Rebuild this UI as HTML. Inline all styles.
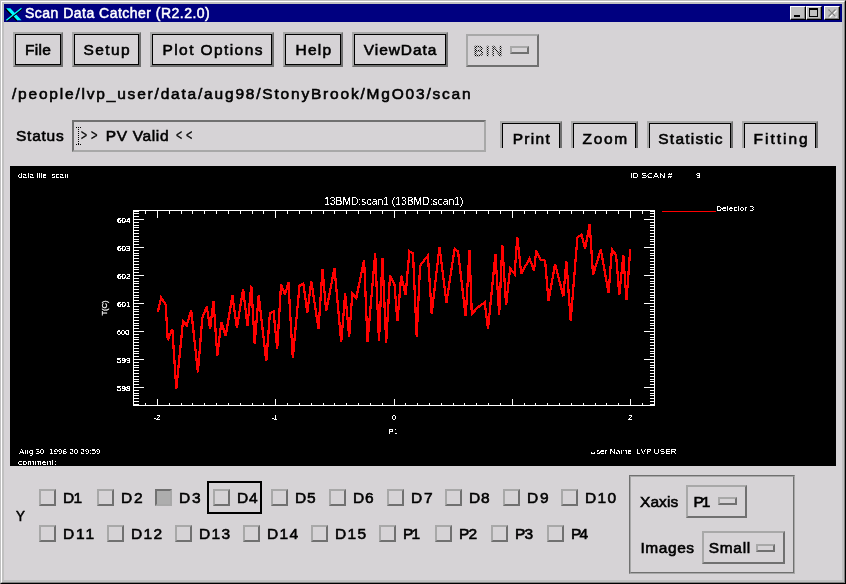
<!DOCTYPE html>
<html><head><meta charset="utf-8"><style>
html,body{margin:0;padding:0}
body{width:846px;height:584px;overflow:hidden;position:relative;background:#d6d3d6;font-family:"Liberation Sans",sans-serif;}
.a{position:absolute}
.btn{position:absolute;border:2px solid;border-color:#a8a8a8 #707070 #707070 #a8a8a8;box-sizing:content-box}
.bi{position:absolute;left:0;top:0;right:0;bottom:0;border:1px solid #000;}
.t{position:absolute;white-space:pre;filter:grayscale(1);font-size:15px;line-height:15px;color:#000;transform-origin:0 0}
.cb{position:absolute;width:13px;height:13px;border:2px solid;border-color:#a8a8a8 #707070 #707070 #a8a8a8}
.pt{position:absolute;white-space:pre;color:#fff;line-height:1;font-family:"Liberation Sans",sans-serif;transform-origin:0 0}
.ind{position:absolute;width:15px;height:4px;border:2px solid;border-color:#a8a8a8 #707070 #707070 #a8a8a8}
</style></head><body>

<svg width="0" height="0" style="position:absolute"><filter id="thr" x="-10%" y="-30%" width="120%" height="160%"><feComponentTransfer><feFuncA type="discrete" tableValues="0 0 1 1"/></feComponentTransfer></filter></svg>
<div class="a" style="left:0;top:0;width:846px;height:584px;box-sizing:border-box;border-left:1px solid #c0c0c0;border-top:1px solid #c0c0c0;border-right:1px solid #000;border-bottom:1px solid #000"></div>
<div class="a" style="left:1px;top:1px;width:844px;height:582px;box-sizing:border-box;border-left:1px solid #fff;border-top:1px solid #fff;border-right:1px solid #808080;border-bottom:1px solid #808080"></div>
<div class="a" style="left:2px;top:2px;width:842px;height:580px;box-sizing:border-box;border:2px solid #c0c0c0"></div>

<div class="a" style="left:4px;top:4px;width:838px;height:18px;background:#000080"></div>
<svg class="a" style="left:3px;top:4px" width="22" height="18" viewBox="0 0 22 18">
<path d="M2.6 4.6 L14.0 16.6" stroke="#000" stroke-width="1.6"/>
<path d="M3.1 4.2 L7.4 4.2 L18.5 16.2 L14.2 16.2 Z" fill="#00ffff"/>
<path d="M18.9 4.9 L4.0 16.9" stroke="#000" stroke-width="1.5"/>
<path d="M18.5 4.2 L3.4 16.2" stroke="#00ffff" stroke-width="1.3"/>
</svg>
<div class="a" style="left:790px;top:6px;width:16px;height:14px;box-sizing:border-box;background:#c0c0c0;border-left:1px solid #fff;border-top:1px solid #fff;border-right:1px solid #000;border-bottom:1px solid #000"><div class="a" style="left:0;top:0;right:0;bottom:0;border-right:1px solid #808080;border-bottom:1px solid #808080"></div></div>
<div class="a" style="left:806px;top:6px;width:16px;height:14px;box-sizing:border-box;background:#c0c0c0;border-left:1px solid #fff;border-top:1px solid #fff;border-right:1px solid #000;border-bottom:1px solid #000"><div class="a" style="left:0;top:0;right:0;bottom:0;border-right:1px solid #808080;border-bottom:1px solid #808080"></div></div>
<div class="a" style="left:824px;top:6px;width:16px;height:14px;box-sizing:border-box;background:#c0c0c0;border-left:1px solid #fff;border-top:1px solid #fff;border-right:1px solid #000;border-bottom:1px solid #000"><div class="a" style="left:0;top:0;right:0;bottom:0;border-right:1px solid #808080;border-bottom:1px solid #808080"></div></div>
<div class="a" style="left:794px;top:15px;width:6px;height:2px;background:#000"></div>
<div class="a" style="left:809px;top:8px;width:9px;height:9px;box-sizing:border-box;border:1px solid #000;border-top-width:2px"></div>
<svg class="a" style="left:824px;top:6px" width="16" height="14" viewBox="0 0 16 14"><path d="M4.5 3.5 L11.5 10.5 M11.5 3.5 L4.5 10.5" stroke="#ffffff" stroke-width="1.3" transform="translate(1,1)"/><path d="M4.5 3.5 L11.5 10.5 M11.5 3.5 L4.5 10.5" stroke="#808080" stroke-width="1.3"/></svg>
<div class="btn" style="left:13px;top:32px;width:46px;height:31px"><div class="bi"></div></div>
<div class="btn" style="left:72px;top:32px;width:65px;height:31px"><div class="bi"></div></div>
<div class="btn" style="left:150px;top:32px;width:120px;height:31px"><div class="bi"></div></div>
<div class="btn" style="left:283px;top:32px;width:56px;height:31px"><div class="bi"></div></div>
<div class="btn" style="left:352px;top:32px;width:92px;height:31px"><div class="bi"></div></div>
<div class="btn" style="left:466px;top:34px;width:69px;height:29px"></div>
<div class="ind" style="left:510px;top:46px"></div>
<div class="a" style="left:72px;top:120px;width:410px;height:28px;border:2px solid;border-color:#707070 #a8a8a8 #a8a8a8 #707070"></div>
<div class="a" style="left:78px;top:127px;width:1px;height:18px;background:repeating-linear-gradient(#000 0 1px,transparent 1px 2px)"></div>
<div class="a" style="left:76px;top:127px;width:5px;height:1px;background:repeating-linear-gradient(90deg,#000 0 1px,transparent 1px 2px)"></div><div class="a" style="left:76px;top:144px;width:5px;height:1px;background:repeating-linear-gradient(90deg,#000 0 1px,transparent 1px 2px)"></div>
<div class="a" style="left:490px;top:115px;width:340px;height:33px;overflow:hidden">
<div class="btn" style="left:10px;top:6px;width:58px;height:31px"><div class="bi"></div></div>
<div class="btn" style="left:81px;top:6px;width:63px;height:31px"><div class="bi"></div></div>
<div class="btn" style="left:157px;top:6px;width:82px;height:31px"><div class="bi"></div></div>
<div class="btn" style="left:252px;top:6px;width:72px;height:31px"><div class="bi"></div></div>
</div>
<svg width="826" height="300" viewBox="10 166 826 300" style="position:absolute;left:10px;top:166px;display:block">
<rect x="10" y="166" width="826" height="300" fill="#000"/>
<g fill="#fff" shape-rendering="crispEdges">
<rect x="133" y="210" width="522" height="1"/>
<rect x="133" y="405" width="522" height="1"/>
<rect x="133" y="210" width="1" height="196"/>
<rect x="654" y="210" width="1" height="196"/>
<rect x="133" y="211" width="6" height="1"/>
<rect x="650" y="211" width="5" height="1"/>
<rect x="133" y="213" width="6" height="1"/>
<rect x="650" y="213" width="5" height="1"/>
<rect x="133" y="216" width="6" height="1"/>
<rect x="650" y="216" width="5" height="1"/>
<rect x="133" y="219" width="11" height="1"/>
<rect x="644" y="219" width="11" height="1"/>
<rect x="133" y="222" width="6" height="1"/>
<rect x="650" y="222" width="5" height="1"/>
<rect x="133" y="225" width="6" height="1"/>
<rect x="650" y="225" width="5" height="1"/>
<rect x="133" y="227" width="6" height="1"/>
<rect x="650" y="227" width="5" height="1"/>
<rect x="133" y="230" width="6" height="1"/>
<rect x="650" y="230" width="5" height="1"/>
<rect x="133" y="233" width="6" height="1"/>
<rect x="650" y="233" width="5" height="1"/>
<rect x="133" y="236" width="6" height="1"/>
<rect x="650" y="236" width="5" height="1"/>
<rect x="133" y="239" width="6" height="1"/>
<rect x="650" y="239" width="5" height="1"/>
<rect x="133" y="241" width="6" height="1"/>
<rect x="650" y="241" width="5" height="1"/>
<rect x="133" y="244" width="6" height="1"/>
<rect x="650" y="244" width="5" height="1"/>
<rect x="133" y="247" width="11" height="1"/>
<rect x="644" y="247" width="11" height="1"/>
<rect x="133" y="250" width="6" height="1"/>
<rect x="650" y="250" width="5" height="1"/>
<rect x="133" y="253" width="6" height="1"/>
<rect x="650" y="253" width="5" height="1"/>
<rect x="133" y="255" width="6" height="1"/>
<rect x="650" y="255" width="5" height="1"/>
<rect x="133" y="258" width="6" height="1"/>
<rect x="650" y="258" width="5" height="1"/>
<rect x="133" y="261" width="6" height="1"/>
<rect x="650" y="261" width="5" height="1"/>
<rect x="133" y="264" width="6" height="1"/>
<rect x="650" y="264" width="5" height="1"/>
<rect x="133" y="267" width="6" height="1"/>
<rect x="650" y="267" width="5" height="1"/>
<rect x="133" y="269" width="6" height="1"/>
<rect x="650" y="269" width="5" height="1"/>
<rect x="133" y="272" width="6" height="1"/>
<rect x="650" y="272" width="5" height="1"/>
<rect x="133" y="275" width="11" height="1"/>
<rect x="644" y="275" width="11" height="1"/>
<rect x="133" y="278" width="6" height="1"/>
<rect x="650" y="278" width="5" height="1"/>
<rect x="133" y="281" width="6" height="1"/>
<rect x="650" y="281" width="5" height="1"/>
<rect x="133" y="283" width="6" height="1"/>
<rect x="650" y="283" width="5" height="1"/>
<rect x="133" y="286" width="6" height="1"/>
<rect x="650" y="286" width="5" height="1"/>
<rect x="133" y="289" width="6" height="1"/>
<rect x="650" y="289" width="5" height="1"/>
<rect x="133" y="292" width="6" height="1"/>
<rect x="650" y="292" width="5" height="1"/>
<rect x="133" y="295" width="6" height="1"/>
<rect x="650" y="295" width="5" height="1"/>
<rect x="133" y="297" width="6" height="1"/>
<rect x="650" y="297" width="5" height="1"/>
<rect x="133" y="300" width="6" height="1"/>
<rect x="650" y="300" width="5" height="1"/>
<rect x="133" y="303" width="11" height="1"/>
<rect x="644" y="303" width="11" height="1"/>
<rect x="133" y="306" width="6" height="1"/>
<rect x="650" y="306" width="5" height="1"/>
<rect x="133" y="309" width="6" height="1"/>
<rect x="650" y="309" width="5" height="1"/>
<rect x="133" y="311" width="6" height="1"/>
<rect x="650" y="311" width="5" height="1"/>
<rect x="133" y="314" width="6" height="1"/>
<rect x="650" y="314" width="5" height="1"/>
<rect x="133" y="317" width="6" height="1"/>
<rect x="650" y="317" width="5" height="1"/>
<rect x="133" y="320" width="6" height="1"/>
<rect x="650" y="320" width="5" height="1"/>
<rect x="133" y="323" width="6" height="1"/>
<rect x="650" y="323" width="5" height="1"/>
<rect x="133" y="325" width="6" height="1"/>
<rect x="650" y="325" width="5" height="1"/>
<rect x="133" y="328" width="6" height="1"/>
<rect x="650" y="328" width="5" height="1"/>
<rect x="133" y="331" width="11" height="1"/>
<rect x="644" y="331" width="11" height="1"/>
<rect x="133" y="334" width="6" height="1"/>
<rect x="650" y="334" width="5" height="1"/>
<rect x="133" y="337" width="6" height="1"/>
<rect x="650" y="337" width="5" height="1"/>
<rect x="133" y="339" width="6" height="1"/>
<rect x="650" y="339" width="5" height="1"/>
<rect x="133" y="342" width="6" height="1"/>
<rect x="650" y="342" width="5" height="1"/>
<rect x="133" y="345" width="6" height="1"/>
<rect x="650" y="345" width="5" height="1"/>
<rect x="133" y="348" width="6" height="1"/>
<rect x="650" y="348" width="5" height="1"/>
<rect x="133" y="351" width="6" height="1"/>
<rect x="650" y="351" width="5" height="1"/>
<rect x="133" y="353" width="6" height="1"/>
<rect x="650" y="353" width="5" height="1"/>
<rect x="133" y="356" width="6" height="1"/>
<rect x="650" y="356" width="5" height="1"/>
<rect x="133" y="359" width="11" height="1"/>
<rect x="644" y="359" width="11" height="1"/>
<rect x="133" y="362" width="6" height="1"/>
<rect x="650" y="362" width="5" height="1"/>
<rect x="133" y="365" width="6" height="1"/>
<rect x="650" y="365" width="5" height="1"/>
<rect x="133" y="367" width="6" height="1"/>
<rect x="650" y="367" width="5" height="1"/>
<rect x="133" y="370" width="6" height="1"/>
<rect x="650" y="370" width="5" height="1"/>
<rect x="133" y="373" width="6" height="1"/>
<rect x="650" y="373" width="5" height="1"/>
<rect x="133" y="376" width="6" height="1"/>
<rect x="650" y="376" width="5" height="1"/>
<rect x="133" y="379" width="6" height="1"/>
<rect x="650" y="379" width="5" height="1"/>
<rect x="133" y="381" width="6" height="1"/>
<rect x="650" y="381" width="5" height="1"/>
<rect x="133" y="384" width="6" height="1"/>
<rect x="650" y="384" width="5" height="1"/>
<rect x="133" y="387" width="11" height="1"/>
<rect x="644" y="387" width="11" height="1"/>
<rect x="133" y="390" width="6" height="1"/>
<rect x="650" y="390" width="5" height="1"/>
<rect x="133" y="393" width="6" height="1"/>
<rect x="650" y="393" width="5" height="1"/>
<rect x="133" y="395" width="6" height="1"/>
<rect x="650" y="395" width="5" height="1"/>
<rect x="133" y="398" width="6" height="1"/>
<rect x="650" y="398" width="5" height="1"/>
<rect x="133" y="401" width="6" height="1"/>
<rect x="650" y="401" width="5" height="1"/>
<rect x="133" y="404" width="6" height="1"/>
<rect x="650" y="404" width="5" height="1"/>
<rect x="133" y="210" width="1" height="4"/>
<rect x="133" y="403" width="1" height="3"/>
<rect x="145" y="210" width="1" height="4"/>
<rect x="145" y="403" width="1" height="3"/>
<rect x="157" y="210" width="1" height="8"/>
<rect x="157" y="399" width="1" height="7"/>
<rect x="169" y="210" width="1" height="4"/>
<rect x="169" y="403" width="1" height="3"/>
<rect x="181" y="210" width="1" height="4"/>
<rect x="181" y="403" width="1" height="3"/>
<rect x="192" y="210" width="1" height="4"/>
<rect x="192" y="403" width="1" height="3"/>
<rect x="204" y="210" width="1" height="4"/>
<rect x="204" y="403" width="1" height="3"/>
<rect x="216" y="210" width="1" height="4"/>
<rect x="216" y="403" width="1" height="3"/>
<rect x="228" y="210" width="1" height="4"/>
<rect x="228" y="403" width="1" height="3"/>
<rect x="240" y="210" width="1" height="4"/>
<rect x="240" y="403" width="1" height="3"/>
<rect x="252" y="210" width="1" height="4"/>
<rect x="252" y="403" width="1" height="3"/>
<rect x="263" y="210" width="1" height="4"/>
<rect x="263" y="403" width="1" height="3"/>
<rect x="275" y="210" width="1" height="8"/>
<rect x="275" y="399" width="1" height="7"/>
<rect x="287" y="210" width="1" height="4"/>
<rect x="287" y="403" width="1" height="3"/>
<rect x="299" y="210" width="1" height="4"/>
<rect x="299" y="403" width="1" height="3"/>
<rect x="311" y="210" width="1" height="4"/>
<rect x="311" y="403" width="1" height="3"/>
<rect x="323" y="210" width="1" height="4"/>
<rect x="323" y="403" width="1" height="3"/>
<rect x="334" y="210" width="1" height="4"/>
<rect x="334" y="403" width="1" height="3"/>
<rect x="346" y="210" width="1" height="4"/>
<rect x="346" y="403" width="1" height="3"/>
<rect x="358" y="210" width="1" height="4"/>
<rect x="358" y="403" width="1" height="3"/>
<rect x="370" y="210" width="1" height="4"/>
<rect x="370" y="403" width="1" height="3"/>
<rect x="382" y="210" width="1" height="4"/>
<rect x="382" y="403" width="1" height="3"/>
<rect x="394" y="210" width="1" height="8"/>
<rect x="394" y="399" width="1" height="7"/>
<rect x="405" y="210" width="1" height="4"/>
<rect x="405" y="403" width="1" height="3"/>
<rect x="417" y="210" width="1" height="4"/>
<rect x="417" y="403" width="1" height="3"/>
<rect x="429" y="210" width="1" height="4"/>
<rect x="429" y="403" width="1" height="3"/>
<rect x="441" y="210" width="1" height="4"/>
<rect x="441" y="403" width="1" height="3"/>
<rect x="453" y="210" width="1" height="4"/>
<rect x="453" y="403" width="1" height="3"/>
<rect x="464" y="210" width="1" height="4"/>
<rect x="464" y="403" width="1" height="3"/>
<rect x="476" y="210" width="1" height="4"/>
<rect x="476" y="403" width="1" height="3"/>
<rect x="488" y="210" width="1" height="4"/>
<rect x="488" y="403" width="1" height="3"/>
<rect x="500" y="210" width="1" height="4"/>
<rect x="500" y="403" width="1" height="3"/>
<rect x="512" y="210" width="1" height="8"/>
<rect x="512" y="399" width="1" height="7"/>
<rect x="524" y="210" width="1" height="4"/>
<rect x="524" y="403" width="1" height="3"/>
<rect x="535" y="210" width="1" height="4"/>
<rect x="535" y="403" width="1" height="3"/>
<rect x="547" y="210" width="1" height="4"/>
<rect x="547" y="403" width="1" height="3"/>
<rect x="559" y="210" width="1" height="4"/>
<rect x="559" y="403" width="1" height="3"/>
<rect x="571" y="210" width="1" height="4"/>
<rect x="571" y="403" width="1" height="3"/>
<rect x="583" y="210" width="1" height="4"/>
<rect x="583" y="403" width="1" height="3"/>
<rect x="595" y="210" width="1" height="4"/>
<rect x="595" y="403" width="1" height="3"/>
<rect x="606" y="210" width="1" height="4"/>
<rect x="606" y="403" width="1" height="3"/>
<rect x="618" y="210" width="1" height="4"/>
<rect x="618" y="403" width="1" height="3"/>
<rect x="630" y="210" width="1" height="8"/>
<rect x="630" y="399" width="1" height="7"/>
<rect x="642" y="210" width="1" height="4"/>
<rect x="642" y="403" width="1" height="3"/>
</g>
<polyline points="157.8,312.3 161.1,297.8 165.6,304.5 167.8,340.2 172.3,329.0 176.3,389.2 183.0,321.2 186.7,325.7 191.2,310.1 197.9,372.4 202.3,317.9 206.8,306.7 210.1,329.0 213.5,301.2 217.3,355.7 221.3,322.3 225.7,335.7 232.4,295.6 236.9,327.9 243.1,288.9 247.5,325.7 251.3,285.6 254.7,343.5 258.7,295.6 266.3,361.3 269.9,313.5 273.5,311.3 277.2,349.1 281.0,284.5 285.0,294.6 288.4,282.3 292.8,358.0 299.5,285.7 303.3,283.4 307.3,312.4 311.3,281.2 318.5,329.1 322.5,269.0 326.2,311.3 334.5,267.8 341.2,342.4 345.2,293.5 349.2,336.9 352.3,293.5 356.3,297.9 364.1,260.0 367.5,342.4 375.2,253.4 379.0,341.3 382.4,257.8 386.2,342.5 390.0,275.7 394.5,284.6 397.4,321.3 401.2,275.7 405.6,294.6 409.4,251.2 413.0,253.4 416.7,336.5 420.1,265.6 427.9,255.6 431.7,313.5 439.5,246.7 446.4,302.4 454.6,248.9 458.0,251.2 465.7,316.4 469.5,250.5 471.8,314.2 477.6,307.5 484.7,302.4 488.0,329.1 495.4,254.5 499.2,314.6 502.3,245.0 506.1,305.2 510.1,268.5 514.6,274.0 517.3,237.3 521.3,274.0 529.5,258.4 534.0,270.7 536.2,250.6 540.7,259.5 545.1,260.7 548.5,300.7 555.1,264.0 563.4,296.3 566.3,260.7 570.7,320.8 577.4,237.3 581.4,234.6 585.2,248.4 589.7,223.9 593.0,275.1 600.8,249.5 608.6,293.0 611.9,249.5 616.1,255.2 619.3,294.7 623.3,255.2 626.5,300.4 630.3,248.6" fill="none" stroke="#ff0000" stroke-width="2.25" stroke-linejoin="miter" stroke-miterlimit="3" shape-rendering="crispEdges"/>
<rect x="662" y="211" width="54" height="1" fill="#ff0000" shape-rendering="crispEdges"/>
</svg>
<div class="pt" style="left:97px;top:304px;font-size:8px;width:16px;text-align:center;-webkit-text-stroke:0.2px #fff;filter:grayscale(1);transform:rotate(-90deg) scaleX(0.95);transform-origin:50% 50%">T(C)</div>
<div class="cb" style="left:39px;top:489px;"></div>
<div class="cb" style="left:97px;top:489px;"></div>
<div class="cb" style="left:155px;top:489px;background:#adadad;border-color:#707070 #a8a8a8 #a8a8a8 #707070;"></div>
<div class="cb" style="left:213px;top:489px;"></div>
<div class="cb" style="left:271px;top:489px;"></div>
<div class="cb" style="left:329px;top:489px;"></div>
<div class="cb" style="left:387px;top:489px;"></div>
<div class="cb" style="left:445px;top:489px;"></div>
<div class="cb" style="left:503px;top:489px;"></div>
<div class="cb" style="left:561px;top:489px;"></div>
<div class="cb" style="left:39px;top:525px"></div>
<div class="cb" style="left:107px;top:525px"></div>
<div class="cb" style="left:175px;top:525px"></div>
<div class="cb" style="left:243px;top:525px"></div>
<div class="cb" style="left:311px;top:525px"></div>
<div class="cb" style="left:379px;top:525px"></div>
<div class="cb" style="left:435px;top:525px"></div>
<div class="cb" style="left:491px;top:525px"></div>
<div class="cb" style="left:547px;top:525px"></div>
<div class="a" style="left:207px;top:481px;width:51px;height:29px;border:2px solid #000"></div>
<div class="a" style="left:629px;top:475px;width:164px;height:97px;border:1px solid;border-color:#707070 #a8a8a8 #a8a8a8 #707070"></div>
<div class="a" style="left:630px;top:476px;width:162px;height:95px;border:1px solid;border-color:#a8a8a8 #707070 #707070 #a8a8a8"></div>
<div class="btn" style="left:686px;top:485px;width:57px;height:29px"></div>
<div class="ind" style="left:718px;top:497px"></div>
<div class="btn" style="left:702px;top:531px;width:79px;height:29px"></div>
<div class="ind" style="left:756px;top:544px"></div>
<div class="t" style="left:25.00px;top:6px;font-size:14px;line-height:14px;font-weight:normal;color:#fff;-webkit-text-stroke:0.5px #fff;letter-spacing:0.480px;">Scan Data Catcher (R2.2.0)</div>
<div class="t" style="left:25.00px;top:42px;font-size:15.5px;line-height:15.5px;font-weight:normal;color:#000;-webkit-text-stroke:0.6px #000;letter-spacing:0.333px;">File</div>
<div class="t" style="left:83.60px;top:42px;font-size:15.5px;line-height:15.5px;font-weight:normal;color:#000;-webkit-text-stroke:0.6px #000;letter-spacing:1.375px;">Setup</div>
<div class="t" style="left:162.50px;top:42px;font-size:15.5px;line-height:15.5px;font-weight:normal;color:#000;-webkit-text-stroke:0.6px #000;letter-spacing:1.409px;">Plot Options</div>
<div class="t" style="left:295.60px;top:42px;font-size:15.5px;line-height:15.5px;font-weight:normal;color:#000;-webkit-text-stroke:0.6px #000;letter-spacing:1.233px;">Help</div>
<div class="t" style="left:363.80px;top:42px;font-size:15.5px;line-height:15.5px;font-weight:normal;color:#000;-webkit-text-stroke:0.6px #000;letter-spacing:0.914px;">ViewData</div>
<div class="t" style="left:473.60px;top:43px;font-size:15.5px;line-height:15.5px;font-weight:normal;color:#000;-webkit-text-stroke:0.3px #000;letter-spacing:1.550px;-webkit-mask-image:repeating-conic-gradient(#000 0 25%,transparent 0 50%);-webkit-mask-size:2px 2px;mask-image:repeating-conic-gradient(#000 0 25%,transparent 0 50%);mask-size:2px 2px;">BIN</div>
<div class="t" style="left:12.00px;top:86px;font-size:15.5px;line-height:15.5px;font-weight:normal;color:#000;-webkit-text-stroke:0.6px #000;letter-spacing:1.800px;">/people/lvp_user/data/aug98/StonyBrook/MgO03/scan</div>
<div class="t" style="left:16.00px;top:128px;font-size:15.5px;line-height:15.5px;font-weight:normal;color:#000;-webkit-text-stroke:0.6px #000;letter-spacing:0.760px;">Status</div>
<div class="t" style="left:80.80px;top:127px;font-size:15.5px;line-height:15.5px;font-weight:normal;color:#000;-webkit-text-stroke:0.35px #000;transform:scaleX(0.6778);">&gt;</div>
<div class="t" style="left:90.80px;top:127px;font-size:15.5px;line-height:15.5px;font-weight:normal;color:#000;-webkit-text-stroke:0.35px #000;transform:scaleX(0.7222);">&gt;</div>
<div class="t" style="left:105.70px;top:128px;font-size:15.5px;line-height:15.5px;font-weight:normal;color:#000;-webkit-text-stroke:0.6px #000;letter-spacing:0.657px;">PV Valid</div>
<div class="t" style="left:175.60px;top:127px;font-size:15.5px;line-height:15.5px;font-weight:normal;color:#000;-webkit-text-stroke:0.35px #000;transform:scaleX(0.6667);">&lt;</div>
<div class="t" style="left:186.00px;top:127px;font-size:15.5px;line-height:15.5px;font-weight:normal;color:#000;-webkit-text-stroke:0.35px #000;transform:scaleX(0.6889);">&lt;</div>
<div class="t" style="left:512.70px;top:131px;font-size:15.5px;line-height:15.5px;font-weight:normal;color:#000;-webkit-text-stroke:0.6px #000;letter-spacing:1.325px;">Print</div>
<div class="t" style="left:582.50px;top:131px;font-size:15.5px;line-height:15.5px;font-weight:normal;color:#000;-webkit-text-stroke:0.6px #000;letter-spacing:1.667px;">Zoom</div>
<div class="t" style="left:658.30px;top:131px;font-size:15.5px;line-height:15.5px;font-weight:normal;color:#000;-webkit-text-stroke:0.6px #000;letter-spacing:1.238px;">Statistic</div>
<div class="t" style="left:753.50px;top:131px;font-size:15.5px;line-height:15.5px;font-weight:normal;color:#000;-webkit-text-stroke:0.6px #000;letter-spacing:2.000px;">Fitting</div>
<div class="t" style="left:17.90px;top:172px;font-size:8px;line-height:8px;font-weight:normal;color:#fff;transform:scaleX(1.0286);filter:url(#thr);">data file: scan</div>
<div class="t" style="left:629.51px;top:172px;font-size:8px;line-height:8px;font-weight:normal;color:#fff;transform:scaleX(1.0921);filter:url(#thr);">ID SCAN #</div>
<div class="t" style="left:695.70px;top:172px;font-size:8px;line-height:8px;font-weight:normal;color:#fff;transform:scaleX(1.0750);filter:url(#thr);">9</div>
<div class="t" style="left:324.27px;top:197px;font-size:10px;line-height:10px;font-weight:normal;color:#fff;transform:scaleX(1.0331);filter:url(#thr);">13BMD:scan1 (13BMD:scan1)</div>
<div class="t" style="left:715.87px;top:205px;font-size:8px;line-height:8px;font-weight:normal;color:#fff;transform:scaleX(1.0306);filter:url(#thr);">Detector 3</div>
<div class="t" style="left:117.00px;top:217px;font-size:7px;line-height:7px;font-weight:normal;color:#fff;-webkit-text-stroke:0.2px #fff;transform:scaleX(1.1455);filter:url(#thr);">604</div>
<div class="t" style="left:117.00px;top:245px;font-size:7px;line-height:7px;font-weight:normal;color:#fff;-webkit-text-stroke:0.2px #fff;transform:scaleX(1.1455);filter:url(#thr);">603</div>
<div class="t" style="left:117.00px;top:273px;font-size:7px;line-height:7px;font-weight:normal;color:#fff;-webkit-text-stroke:0.2px #fff;transform:scaleX(1.1455);filter:url(#thr);">602</div>
<div class="t" style="left:117.00px;top:301px;font-size:7px;line-height:7px;font-weight:normal;color:#fff;-webkit-text-stroke:0.2px #fff;transform:scaleX(1.1455);filter:url(#thr);">601</div>
<div class="t" style="left:117.00px;top:329px;font-size:7px;line-height:7px;font-weight:normal;color:#fff;-webkit-text-stroke:0.2px #fff;transform:scaleX(1.0500);filter:url(#thr);">600</div>
<div class="t" style="left:117.00px;top:357px;font-size:7px;line-height:7px;font-weight:normal;color:#fff;-webkit-text-stroke:0.2px #fff;transform:scaleX(1.1455);filter:url(#thr);">599</div>
<div class="t" style="left:117.00px;top:385px;font-size:7px;line-height:7px;font-weight:normal;color:#fff;-webkit-text-stroke:0.2px #fff;transform:scaleX(1.1455);filter:url(#thr);">598</div>
<div class="t" style="left:154.00px;top:414px;font-size:7px;line-height:7px;font-weight:normal;color:#fff;-webkit-text-stroke:0.2px #fff;transform:scaleX(1.0000);filter:url(#thr);">-2</div>
<div class="t" style="left:271.90px;top:414px;font-size:7px;line-height:7px;font-weight:normal;color:#fff;-webkit-text-stroke:0.2px #fff;transform:scaleX(0.8833);filter:url(#thr);">-1</div>
<div class="t" style="left:392.10px;top:414px;font-size:7px;line-height:7px;font-weight:normal;color:#fff;-webkit-text-stroke:0.2px #fff;transform:scaleX(0.9750);filter:url(#thr);">0</div>
<div class="t" style="left:628.20px;top:414px;font-size:7px;line-height:7px;font-weight:normal;color:#fff;-webkit-text-stroke:0.2px #fff;transform:scaleX(1.0000);filter:url(#thr);">2</div>
<div class="t" style="left:387.95px;top:428px;font-size:8px;line-height:8px;font-weight:normal;color:#fff;transform:scaleX(1.0500);filter:url(#thr);">P1</div>
<div class="t" style="left:18.90px;top:448px;font-size:8px;line-height:8px;font-weight:normal;color:#fff;transform:scaleX(1.0062);filter:url(#thr);">Aug 30  1998 20:29:59</div>
<div class="t" style="left:18.00px;top:459px;font-size:8px;line-height:8px;font-weight:normal;color:#fff;transform:scaleX(1.0909);filter:url(#thr);">comment:</div>
<div class="t" style="left:590.26px;top:448px;font-size:8px;line-height:8px;font-weight:normal;color:#fff;transform:scaleX(1.0354);filter:url(#thr);">User Name: LVP USER</div>
<div class="t" style="left:15.70px;top:508px;font-size:15.5px;line-height:15.5px;font-weight:normal;color:#000;-webkit-text-stroke:0.6px #000;transform:scaleX(0.8600);">Y</div>
<div class="t" style="left:63.00px;top:490px;font-size:15.5px;line-height:15.5px;font-weight:normal;color:#000;-webkit-text-stroke:0.6px #000;letter-spacing:-0.600px;">D1</div>
<div class="t" style="left:121.00px;top:490px;font-size:15.5px;line-height:15.5px;font-weight:normal;color:#000;-webkit-text-stroke:0.6px #000;letter-spacing:1.900px;">D2</div>
<div class="t" style="left:179.00px;top:490px;font-size:15.5px;line-height:15.5px;font-weight:normal;color:#000;-webkit-text-stroke:0.6px #000;letter-spacing:1.900px;">D3</div>
<div class="t" style="left:237.00px;top:490px;font-size:15.5px;line-height:15.5px;font-weight:normal;color:#000;-webkit-text-stroke:0.6px #000;letter-spacing:0.900px;">D4</div>
<div class="t" style="left:295.00px;top:490px;font-size:15.5px;line-height:15.5px;font-weight:normal;color:#000;-webkit-text-stroke:0.6px #000;letter-spacing:0.900px;">D5</div>
<div class="t" style="left:353.00px;top:490px;font-size:15.5px;line-height:15.5px;font-weight:normal;color:#000;-webkit-text-stroke:0.6px #000;letter-spacing:0.900px;">D6</div>
<div class="t" style="left:411.00px;top:490px;font-size:15.5px;line-height:15.5px;font-weight:normal;color:#000;-webkit-text-stroke:0.6px #000;letter-spacing:1.900px;">D7</div>
<div class="t" style="left:469.00px;top:490px;font-size:15.5px;line-height:15.5px;font-weight:normal;color:#000;-webkit-text-stroke:0.6px #000;letter-spacing:0.900px;">D8</div>
<div class="t" style="left:527.00px;top:490px;font-size:15.5px;line-height:15.5px;font-weight:normal;color:#000;-webkit-text-stroke:0.6px #000;letter-spacing:1.900px;">D9</div>
<div class="t" style="left:585.00px;top:490px;font-size:15.5px;line-height:15.5px;font-weight:normal;color:#000;-webkit-text-stroke:0.6px #000;letter-spacing:1.300px;">D10</div>
<div class="t" style="left:63.00px;top:526px;font-size:15.5px;line-height:15.5px;font-weight:normal;color:#000;-webkit-text-stroke:0.6px #000;letter-spacing:1.900px;">D11</div>
<div class="t" style="left:131.00px;top:526px;font-size:15.5px;line-height:15.5px;font-weight:normal;color:#000;-webkit-text-stroke:0.6px #000;letter-spacing:1.400px;">D12</div>
<div class="t" style="left:199.00px;top:526px;font-size:15.5px;line-height:15.5px;font-weight:normal;color:#000;-webkit-text-stroke:0.6px #000;letter-spacing:1.400px;">D13</div>
<div class="t" style="left:267.00px;top:526px;font-size:15.5px;line-height:15.5px;font-weight:normal;color:#000;-webkit-text-stroke:0.6px #000;letter-spacing:1.400px;">D14</div>
<div class="t" style="left:335.00px;top:526px;font-size:15.5px;line-height:15.5px;font-weight:normal;color:#000;-webkit-text-stroke:0.6px #000;letter-spacing:1.400px;">D15</div>
<div class="t" style="left:403.00px;top:526px;font-size:15.5px;line-height:15.5px;font-weight:normal;color:#000;-webkit-text-stroke:0.6px #000;letter-spacing:-1.800px;">P1</div>
<div class="t" style="left:459.00px;top:526px;font-size:15.5px;line-height:15.5px;font-weight:normal;color:#000;-webkit-text-stroke:0.6px #000;letter-spacing:-0.800px;">P2</div>
<div class="t" style="left:515.00px;top:526px;font-size:15.5px;line-height:15.5px;font-weight:normal;color:#000;-webkit-text-stroke:0.6px #000;letter-spacing:-0.800px;">P3</div>
<div class="t" style="left:571.00px;top:526px;font-size:15.5px;line-height:15.5px;font-weight:normal;color:#000;-webkit-text-stroke:0.6px #000;letter-spacing:-1.800px;">P4</div>
<div class="t" style="left:640.00px;top:494px;font-size:15.5px;line-height:15.5px;font-weight:normal;color:#000;-webkit-text-stroke:0.6px #000;letter-spacing:0.075px;">Xaxis</div>
<div class="t" style="left:693.50px;top:494px;font-size:15.5px;line-height:15.5px;font-weight:normal;color:#000;-webkit-text-stroke:0.6px #000;letter-spacing:-2.000px;">P1</div>
<div class="t" style="left:640.40px;top:540px;font-size:15.5px;line-height:15.5px;font-weight:normal;color:#000;-webkit-text-stroke:0.6px #000;letter-spacing:0.580px;">Images</div>
<div class="t" style="left:708.70px;top:540px;font-size:15.5px;line-height:15.5px;font-weight:normal;color:#000;-webkit-text-stroke:0.6px #000;letter-spacing:0.700px;">Small</div>
</body></html>
